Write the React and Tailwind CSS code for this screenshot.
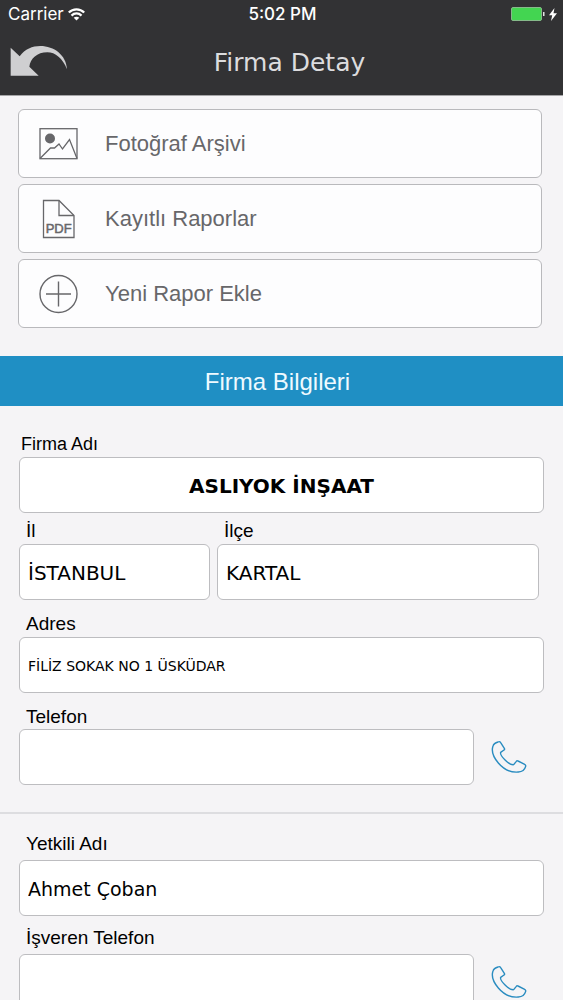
import React from 'react';

function StatusBar() {
  return (
    <div className="grid h-7 grid-cols-3 items-center pr-[6px] pl-2 font-['Inter',sans-serif] text-[17px] leading-7 text-white">
      <div className="flex items-center gap-1">
        <span>Carrier</span>
        <svg width="17" height="13" viewBox="0 0 17 13" fill="none" stroke="white" strokeWidth="2.200" aria-hidden="true">
          <path d="M0.800 4.600C5 .2 12 .2 16.200 4.600" />
          <path d="M3.500 7.600c2.900-2.900 7.100-2.900 10 0" />
          <path d="M8.500 12.600 5.700 9.800c1.600-1.500 4-1.500 5.600 0Z" fill="white" stroke="none" />
        </svg>
      </div>
      <div className="text-center font-medium">5:02 PM</div>
      <div className="flex items-center justify-end gap-1">
        <svg width="34" height="15" viewBox="0 0 34 15" aria-hidden="true">
          <rect x="0.500" y="0.500" width="30" height="13" rx="1.500" fill="#43d551" stroke="#86b98a" />
          <path d="M32 5h1.500v4H32z" fill="#e4e4e4" />
        </svg>
        <svg width="8" height="13" viewBox="0 0 8 13" fill="white" aria-hidden="true">
          <path d="M5.500 0 0 7.300h3.200L2 13l6-7.800H4.500Z" />
        </svg>
      </div>
    </div>
  );
}

function BackIcon() {
  return (
    <svg width="58" height="32" viewBox="0 0 174 96" aria-hidden="true">
      <path
        fill="#cfcfd1"
        d="M2 8 29 34C45 12 67 3 91 3c41 0 78 27 80 70C158 40 136 22 112 22c-31 0-51 19-54 43L86 92H2Z"
      />
    </svg>
  );
}

function PhotoIcon() {
  return (
    <svg width="40" height="34" viewBox="0 0 40 34" fill="none" stroke="#67676a" strokeWidth="1.300" aria-hidden="true">
      <rect x="1" y="1.700" width="37" height="30" />
      <path d="M1 31.500 11.500 21h4l4.500-4 3.500 5 7-9.500 7.500 19" />
      <circle cx="11" cy="11.500" r="5" fill="#67676a" stroke="none" />
    </svg>
  );
}

function PdfIcon() {
  return (
    <svg width="40" height="40" viewBox="0 0 40 40" fill="none" stroke="#67676a" strokeWidth="1.300" aria-hidden="true">
      <path d="M4.500 1.500H20L35 16.500V38.500H4.500Z" />
      <path d="M20 1.500V16.500H35" />
      <text x="19.700" y="34" textAnchor="middle" fontFamily="Liberation Sans, sans-serif" fontSize="13" fill="#67676a" stroke="#67676a" strokeWidth="0.500">
        PDF
      </text>
    </svg>
  );
}

function PlusIcon() {
  return (
    <svg width="40" height="40" viewBox="0 0 40 40" fill="none" stroke="#67676a" strokeWidth="1.400" aria-hidden="true">
      <circle cx="19.500" cy="20" r="18.500" />
      <path d="M7 20h25M19.500 7.500v25" />
    </svg>
  );
}

function PhoneIcon() {
  return (
    <svg width="36" height="34" viewBox="0 0 108 102" fill="none" stroke="#2a8cc0" strokeWidth="4.200" strokeLinejoin="round" aria-hidden="true">
      <path d="M21 6Q26 3 29 8L40 25Q42 28 39 30L29 37C27 42 34 52 43 61C52 70 60 75 68 74L76 64Q78 61 81 63L101 73Q105 75 104 79C101 90 95 95 82 96C59 98 38 88 22 69C6 50 1 32 6 18C8 11 14 8 21 6Z" />
    </svg>
  );
}

function MenuButton({ icon, children }) {
  return (
    <button
      type="button"
      className="flex h-[69px] w-full items-center rounded-md border border-[#b9b9bc] bg-[#fdfdfe] pl-5 text-left text-[22px] text-[#67676a]"
    >
      <span className="flex w-[66px] items-center">{icon}</span>
      {children}
    </button>
  );
}

function Field({ id, label, labelClass = 'pl-[7px] text-[19px]', inputClass = 'text-[19px]', className = '', type = 'text', value = '' }) {
  return (
    <div className={'flex flex-col ' + className}>
      <label htmlFor={id} className={'leading-5 ' + labelClass}>
        {label}
      </label>
      <input
        id={id}
        type={type}
        defaultValue={value}
        className={
          "h-14 w-full rounded-md border border-[#bdbdc0] bg-white px-2 pt-[2px] font-['DejaVu_Sans',sans-serif] text-black outline-none " +
          inputClass
        }
      />
    </div>
  );
}

function PhoneField({ gap, ...props }) {
  return (
    <div className="flex items-end">
      <Field type="tel" className={'flex-1 ' + gap} {...props} />
      <a href="tel:" aria-label={props.label} className="flex h-14 w-[70px] items-center justify-center">
        <PhoneIcon />
      </a>
    </div>
  );
}

export default function App() {
  return (
    <div className="flex h-screen flex-col overflow-hidden bg-[#f5f4f6] font-['Liberation_Sans',Arial,sans-serif] text-black">
      <header className="shrink-0 border-b border-[#a5a5a7] bg-[#323234]">
        <StatusBar />
        <div className="grid h-[67px] grid-cols-[1fr_auto_1fr] items-center px-[10px] pt-[2px]">
          <button type="button" aria-label="Geri" className="justify-self-start pb-1">
            <BackIcon />
          </button>
          <h1 className="pl-4 font-['DejaVu_Sans',sans-serif] text-[25px] text-[#dcdcde]">Firma Detay</h1>
        </div>
      </header>

      <main className="min-h-0 flex-1 overflow-y-auto [scrollbar-width:none]">
        <nav className="flex flex-col gap-[6px] pt-[13px] pr-[21px] pb-7 pl-[18px]">
          <MenuButton icon={<PhotoIcon />}>Fotoğraf Arşivi</MenuButton>
          <MenuButton icon={<PdfIcon />}>Kayıtlı Raporlar</MenuButton>
          <MenuButton icon={<PlusIcon />}>Yeni Rapor Ekle</MenuButton>
        </nav>

        <h2 className="bg-[#1f8fc4] pt-[2px] pr-2 text-center text-[24px] leading-[48px] text-[#effaff]">Firma Bilgileri</h2>

        <form>
          <section className="flex flex-col px-[19px] pt-7 pb-[27px]">
            <Field
              id="firma"
              label="Firma Adı"
              value="ASLIYOK İNŞAAT"
              className="gap-[3px]"
              labelClass="pl-[2px] text-[18px]"
              inputClass="text-center text-[20px] font-bold"
            />
            <div className="flex gap-[7px] pt-2 pr-[5px]">
              <Field id="il" label="İl" value="İSTANBUL" className="w-[191px] shrink-0 gap-[3px]" inputClass="text-[20px]" />
              <Field id="ilce" label="İlçe" value="KARTAL" className="flex-1 gap-[3px]" inputClass="text-[20px]" />
            </div>
            <Field id="adres" label="Adres" value="FİLİZ SOKAK NO 1 ÜSKÜDAR" className="gap-[3px] pt-[14px]" inputClass="text-[14px]" />
            <div className="pt-[14px]">
              <PhoneField id="telefon" label="Telefon" gap="gap-[2px]" />
            </div>
          </section>

          <section className="flex flex-col border-t-2 border-[#dddde0] px-[19px] pt-5 pb-7">
            <Field id="yetkili" label="Yetkili Adı" value="Ahmet Çoban" className="gap-[6px]" />
            <div className="pt-3">
              <PhoneField id="isveren" label="İşveren Telefon" gap="gap-[6px]" />
            </div>
          </section>
        </form>
      </main>
    </div>
  );
}
